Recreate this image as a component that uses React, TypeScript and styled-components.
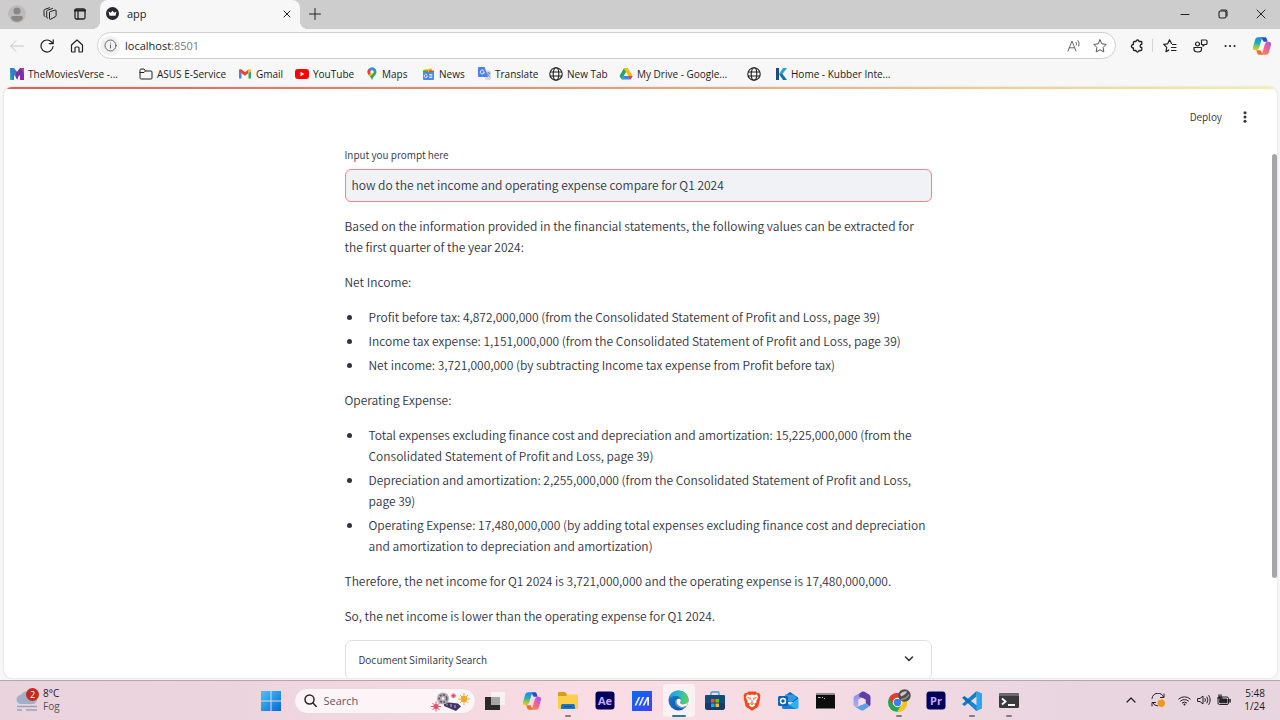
import React from "react";
import styled, { createGlobalStyle } from "styled-components";

const uiFont = `"Open Sans", "Noto Sans", sans-serif`;
const docFont = `"Noto Sans CJK SC", "Noto Sans", sans-serif`;

const GlobalStyle = createGlobalStyle`
  *, *::before, *::after { box-sizing: border-box; }
  body { margin: 0; background: #f7f7f7; }
  button, input { font: inherit; color: inherit; }
  button { border: 0; padding: 0; background: none; }
  svg { display: block; flex: none; }
`;

/* ---------- window frame ---------- */

const Window = styled.div`
  display: flex;
  flex-direction: column;
  height: 100vh;
  overflow: hidden;
  background: #f7f7f7;
  color: #1b1b1b;
  font-family: ${uiFont};
  font-size: 11px;
`;

const TabStrip = styled.div`
  display: flex;
  flex: none;
  height: 29px;
  background: #cdcdcd;
`;

const IconButton = styled.button<{ $w?: number }>`
  display: flex;
  align-items: center;
  justify-content: center;
  flex: none;
  width: ${(p) => p.$w ?? 30}px;
  height: 28px;
`;

const TabTools = styled.div`
  display: flex;
  flex: none;
  width: 100px;
  padding-left: 1px;
`;

const Tab = styled.div`
  position: relative;
  display: flex;
  align-items: center;
  flex: none;
  width: 200px;
  padding: 0 4px 2px 6px;
  gap: 8px;
  border-radius: 8px 8px 0 0;
  background: #f7f7f7;

  &::before,
  &::after {
    content: "";
    position: absolute;
    bottom: 0;
    width: 8px;
    height: 8px;
  }
  &::before {
    left: -8px;
    background: radial-gradient(circle at 0 0, #cdcdcd 8px, #f7f7f7 8px);
  }
  &::after {
    right: -8px;
    background: radial-gradient(circle at 100% 0, #cdcdcd 8px, #f7f7f7 8px);
  }
`;

const TabTitle = styled.span`
  flex: 1;
`;

const WindowButtons = styled.div`
  display: flex;
  margin-left: auto;
`;

const Toolbar = styled.div`
  display: flex;
  align-items: center;
  flex: none;
  height: 33px;
  padding: 0 3px 0 2px;
`;

const AddressBar = styled.div`
  display: flex;
  align-items: center;
  flex: 1;
  height: 27px;
  margin: 0 6px 0 5px;
  padding: 0 2px;
  border: 1px solid #cfcfcf;
  border-radius: 14px;
  background: #fff;
`;

const SiteInfo = styled.button`
  display: flex;
  align-items: center;
  justify-content: center;
  width: 20px;
  height: 20px;
  border-radius: 10px;
  background: #f1f1f1;
`;

const Url = styled.div`
  flex: 1;
  padding-left: 5px;
  color: #222;

  span {
    color: #777;
  }
`;

const Divider = styled.span`
  width: 1px;
  height: 13px;
  background: #d4d4d4;
`;

const Bookmarks = styled.nav`
  display: flex;
  align-items: center;
  flex: none;
  height: 25px;
  padding: 0 0 2px 10px;
`;

const Bookmark = styled.a<{ $w: number }>`
  display: flex;
  align-items: center;
  flex: none;
  gap: 4px;
  width: ${(p) => p.$w}px;
  font-size: 10px;
  white-space: nowrap;
  color: #1b1b1b;
  text-decoration: none;
`;

/* ---------- web page ---------- */

const Page = styled.div`
  display: flex;
  flex-direction: column;
  flex: 1;
  min-height: 0;
  margin: 0 3px 2px 4px;
  overflow: hidden;
  border-radius: 8px;
  background: #fff;
  box-shadow: 0 0 2px #c4c8c8;
  color: #31333f;
  font-family: ${docFont};
  font-weight: 350;
`;

const Decoration = styled.div`
  flex: none;
  height: 2px;
  background: linear-gradient(90deg, #da5f5f, #e0a27e 50%, #f5f0a4);
`;

const AppHeader = styled.header`
  display: flex;
  align-items: center;
  justify-content: flex-end;
  flex: none;
  height: 55px;
  gap: 8px;
  padding-right: 17px;
  font-size: 10px;
`;

const Scroller = styled.div`
  display: flex;
  flex: 1;
  min-height: 0;
`;

const Main = styled.main`
  flex: 1;
  overflow: hidden;
`;

const Column = styled.div`
  display: flex;
  flex-direction: column;
  max-width: 587px;
  margin: 0 auto;
  gap: 14px;
  font-size: 12px;
  line-height: 21px;
`;

const Field = styled.div`
  display: flex;
  flex-direction: column;
  gap: 4px;
  height: 57px;
`;

const FieldLabel = styled.label`
  font-size: 10px;
`;

const PromptInput = styled.input`
  flex: none;
  width: 100%;
  height: 33px;
  padding: 0 6px 2px;
  border: 1px solid #ee8389;
  border-radius: 6px;
  outline: none;
  background: #f0f2f6;
  font-size: 12px;
`;

const Paragraph = styled.p`
  margin: 0;
`;

const List = styled.ul`
  display: flex;
  flex-direction: column;
  gap: 3px;
  margin: 0 -4px 0 0;
  padding-left: 18px;

  li {
    padding-left: 6px;
  }
`;

const Expander = styled.button`
  display: flex;
  align-items: center;
  justify-content: space-between;
  width: 100%;
  height: 40px;
  padding: 0 17px 2px 13px;
  border: 1px solid #dddee1;
  border-radius: 7px;
  font-size: 10px;
`;

const Track = styled.div`
  flex: none;
  width: 5px;
  padding-top: 10px;
`;

const Thumb = styled.div`
  height: 81%;
  border-radius: 3px;
  background: #a5a5ab;
`;

/* ---------- taskbar ---------- */

const Taskbar = styled.footer`
  display: grid;
  grid-template-columns: 1fr 775px 1fr;
  flex: none;
  height: 40px;
  border-top: 1px solid #b3a6ad;
  background: linear-gradient(90deg, #e9d3dd, #ecd4de 18%, #fadde4 48%, #f6dbe3 62%, #e8d5e0 85%, #e7d5e0);
`;

const Weather = styled.button`
  display: flex;
  align-items: center;
  gap: 3px;
  padding: 0 0 2px 16px;
  font-size: 10px;
  line-height: 13px;
  text-align: left;

  small {
    display: block;
    font-size: 10px;
    color: #5a5158;
  }
`;

const Dock = styled.div`
  display: flex;
  align-items: center;
`;

const StartButton = styled.button`
  display: flex;
  justify-content: center;
  flex: none;
  width: 37px;
`;

const SearchBox = styled.label`
  display: flex;
  align-items: center;
  flex: none;
  width: 182px;
  height: 26px;
  margin: 0 1px 0 4px;
  padding: 0 5px 0 9px;
  gap: 7px;
  border: 1px solid #ead9df;
  border-radius: 13px;
  background: #fcf4f6;

  input {
    flex: 1;
    min-width: 0;
    padding: 0;
    border: 0;
    outline: none;
    background: none;
    font-size: 11px;
  }
  input::placeholder {
    color: #5f585c;
    opacity: 1;
  }
`;

const Apps = styled.div`
  display: grid;
  grid-template-columns: repeat(15, 1fr);
  flex: 1;
`;

const AppButton = styled.button<{ $active?: boolean; $running?: boolean }>`
  position: relative;
  display: flex;
  align-items: center;
  justify-content: center;
  justify-self: center;
  width: 32px;
  height: 33px;
  border-radius: 4px;
  background: ${(p) => (p.$active ? "#fbf1f4" : "transparent")};

  &::after {
    content: "";
    display: ${(p) => (p.$active || p.$running ? "block" : "none")};
    position: absolute;
    bottom: 0;
    left: 50%;
    width: ${(p) => (p.$active ? 14 : 6)}px;
    height: 2px;
    border-radius: 1px;
    background: ${(p) => (p.$active ? "#26808d" : "#857b80")};
    transform: translateX(-50%);
  }
`;

const Tray = styled.div`
  display: flex;
  align-items: center;
  justify-content: flex-end;
  padding: 0 15px 1px 0;
`;

const Clock = styled.time`
  width: 30px;
  font-size: 10px;
  line-height: 13px;
  text-align: right;
  white-space: pre-line;
`;

/* ---------- icons ---------- */

type IconProps = { w: number; h?: number; sw?: number; color?: string; children: React.ReactNode };

const Icon = ({ w, h = w, sw = 1, color = "#222", children }: IconProps) => (
  <svg
    width={w}
    height={h}
    viewBox={`0 0 ${w} ${h}`}
    fill="none"
    stroke={color}
    strokeWidth={sw}
    strokeLinecap="round"
    strokeLinejoin="round"
    aria-hidden="true"
  >
    {children}
  </svg>
);

const Globe = () => (
  <Icon w={14} sw={1.1}>
    <circle cx="7" cy="7" r="6.2" />
    <ellipse cx="7" cy="7" rx="2.8" ry="6.2" />
    <path d="M1.2 5h11.6M1.2 9h11.6" />
  </Icon>
);

const Copilot = ({ id }: { id: string }) => (
  <svg width="20" height="20" viewBox="0 0 20 20" aria-hidden="true">
    <defs>
      <linearGradient id={`${id}a`} x1=".3" y1="0" x2=".2" y2="1">
        <stop offset="0" stopColor="#1f8be8" />
        <stop offset=".45" stopColor="#25b0b8" />
        <stop offset=".75" stopColor="#a8cb3c" />
        <stop offset="1" stopColor="#f3c11b" />
      </linearGradient>
      <linearGradient id={`${id}b`} x1=".9" y1="0" x2=".3" y2="1">
        <stop offset="0" stopColor="#a65bea" />
        <stop offset=".5" stopColor="#ee5da0" />
        <stop offset="1" stopColor="#f9894b" />
      </linearGradient>
    </defs>
    <path d="M9 1.200h3.800c1.100 0 1.700.7 2 1.700l.9 2.800h-4z" fill="#2450c8" />
    <path d="M11 18.800H7.200c-1.100 0-1.700-.7-2-1.700l-.9-2.800h4z" fill="#f26a3c" />
    <path d="M6.200 1.200h5.300c-1 .3-1.500 1-1.900 2.200L7.300 11.300c-.6 2-1.600 3-3.300 3h-.8C1.300 14.300.5 13 1 11L3.200 3.500C3.700 2 4.700 1.200 6.200 1.200z" fill={`url(#${id}a)`} />
    <path d="M13.800 18.800H8.500c1-.3 1.500-1 1.900-2.200l2.300-7.900c.6-2 1.600-3 3.300-3h.8c1.900 0 2.700 1.300 2.200 3.300l-2.200 7.500c-.5 1.500-1.500 2.300-3 2.300z" fill={`url(#${id}b)`} />
  </svg>
);

const GmailIcon = () => (
  <svg width="14" height="12" viewBox="0 0 14 12" aria-hidden="true">
    <path d="M1 3v7.500h2.500V5z" fill="#4285f4" />
    <path d="M13 3v7.500h-2.500V5z" fill="#34a853" />
    <path d="M1 2.500C1 1.200 2.400.8 3.500 1.500L7 4.200l3.500-2.700V5L7 7.700 1 3.400z" fill="#ea4335" />
    <path d="M10.500 1.500c1.100-.7 2.500-.3 2.500 1v1L10.500 5z" fill="#fbbc04" />
  </svg>
);

const bookmarks: { label: string; w: number; icon: React.ReactNode }[] = [
  {
    label: "TheMoviesVerse -...",
    w: 129,
    icon: (
      <svg width="14" height="12" viewBox="0 0 14 12" aria-hidden="true">
        <path d="M0 0h4v12H0z" fill="#37b6a0" />
        <path d="M0 0h4l4 5v7L4 7v5H2z" fill="#2b7fd0" />
        <path d="M14 0h-4L6 5v6l4-4v5h4z" fill="#7b2fa6" />
        <path d="M11 0h3v7z" fill="#c13a93" />
      </svg>
    ),
  },
  {
    label: "ASUS E-Service",
    w: 99,
    icon: (
      <Icon w={14} h={12}>
        <path d="M1 2q0-1 1-1h3l1.500 2H12q1 0 1 1v6q0 1-1 1H2q-1 0-1-1zM1 4.500h4L6.500 3" />
      </Icon>
    ),
  },
  { label: "Gmail", w: 57, icon: <GmailIcon /> },
  {
    label: "YouTube",
    w: 71,
    icon: (
      <svg width="14" height="10" viewBox="0 0 14 10" aria-hidden="true">
        <rect width="14" height="10" rx="3" fill="#f00" />
        <path d="M5.500 2.800v4.400L9.300 5z" fill="#fff" />
      </svg>
    ),
  },
  {
    label: "Maps",
    w: 56,
    icon: (
      <svg width="12" height="14" viewBox="0 0 12 14" aria-hidden="true">
        <path d="M6 .5a4.500 4.500 0 0 0-4.500 4.500C1.500 8 5.300 9.500 6 13.500 6.700 9.500 10.500 8 10.500 5A4.500 4.500 0 0 0 6 .5z" fill="#34a853" />
        <path d="M6 .5A4.500 4.500 0 0 1 10.200 3.500L6 5z" fill="#4285f4" />
        <path d="M6 .5L2.500 2.200 4.500 5 7.500 1z" fill="#4285f4" />
        <path d="M2.600 2.100C1 4 1.300 6.300 2.600 8L6 5z" fill="#ea4335" />
        <path d="M2.600 8.100L6 5l1 2-3.300 2.600z" fill="#fbbc04" />
        <circle cx="6" cy="4.900" r="1.700" fill="#fff" />
      </svg>
    ),
  },
  {
    label: "News",
    w: 56,
    icon: (
      <svg width="13" height="12" viewBox="0 0 13 12" aria-hidden="true">
        <path d="M2 1.500l8-1 .5 4H2z" fill="#fbbc04" />
        <path d="M1 2.500h5v3H1z" fill="#34a853" />
        <path d="M7 2.200l5 .5-.3 3H7z" fill="#ea4335" />
        <rect x="1" y="4" width="11" height="8" rx="1" fill="#4c86ee" />
        <path d="M5.400 8H4.200M5.400 8A1.600 1.600 0 1 1 4.900 6.800M7.300 6.500h3M7.300 8h3M7.300 9.500h3" stroke="#fff" strokeWidth=".8" fill="none" />
      </svg>
    ),
  },
  {
    label: "Translate",
    w: 71,
    icon: (
      <svg width="13" height="13" viewBox="0 0 13 13" aria-hidden="true">
        <path d="M5 3.500h7q1 0 1 1V12q0 1-1 1H7.500z" fill="#d5d8dc" />
        <path d="M1 0h5.500L10 10H1Q0 10 0 9V1q0-1 1-1z" fill="#4a80e8" />
        <path d="M6.300 5H4.800M6.300 5A2 2 0 1 1 5.700 3.500" stroke="#fff" strokeWidth=".9" fill="none" />
        <path d="M8.500 6h3.500M10.300 5v1M11.600 6c-.4 1.800-1.500 3-2.600 3.700M9.300 7c.5 1.200 1.500 2.200 2.500 2.700" stroke="#5a7fc0" strokeWidth=".8" fill="none" />
      </svg>
    ),
  },
  { label: "New Tab", w: 70, icon: <Globe /> },
  {
    label: "My Drive - Google...",
    w: 128,
    icon: (
      <svg width="14" height="12" viewBox="0 0 14 12" aria-hidden="true">
        <path d="M4.800.5h4.400L7 4.300 2.700 11.500.5 8z" fill="#1fa463" />
        <path d="M9.200.5L13.600 8H9.300L4.800.5z" fill="#fbbc04" />
        <path d="M4.800 8h8.800l-2.200 3.500H2.700z" fill="#4285f4" />
        <path d="M9.300 8h4.300l-2 3.500z" fill="#ea4335" />
        <path d="M7 4.300L9.200 8H4.800z" fill="#f7f7f7" />
      </svg>
    ),
  },
  { label: "", w: 28, icon: <Globe /> },
  {
    label: "Home - Kubber Inte...",
    w: 130,
    icon: (
      <svg width="12" height="12" viewBox="0 0 12 12" aria-hidden="true">
        <path d="M1 0h3v12H1z" fill="#174e80" />
        <path d="M4 6l4-6h4L7.500 6z" fill="#2ba3c8" />
        <path d="M4 6h3.500L12 12H8z" fill="#1b6f9f" />
      </svg>
    ),
  },
];

/* ---------- taskbar app icons ---------- */

const AdobeTile = ({ label }: { label: string }) => (
  <svg width="20" height="20" viewBox="0 0 20 20" aria-hidden="true">
    <rect x=".5" y=".5" width="19" height="18" rx="3" fill="#00005b" />
    <text x="10" y="14" textAnchor="middle" fill="#c9a5ff" fontFamily="Open Sans" fontWeight="700" fontSize="11">
      {label}
    </text>
  </svg>
);

const apps: { name: string; active?: boolean; running?: boolean; icon: React.ReactNode }[] = [
  {
    name: "Task view",
    icon: (
      <svg width="20" height="20" viewBox="0 0 20 20" aria-hidden="true">
        <path d="M0 6h15v13H0z" fill="#2c2a2b" />
        <path d="M6 1h14v13H6z" fill="#f6f1f3" />
        <path d="M6 6h9v8H6z" fill="#a8a5a6" />
      </svg>
    ),
  },
  { name: "Copilot", icon: <Copilot id="dock" /> },
  {
    name: "File Explorer",
    running: true,
    icon: (
      <svg width="20" height="19" viewBox="0 0 20 19" aria-hidden="true">
        <path d="M0 2q0-1 1-1h6l2 2.500V8H0z" fill="#dc9a1c" />
        <path d="M1 5h7l1.500-1.500H19q1 0 1 1V17q0 1-1 1H1q-1 0-1-1V6q0-1 1-1z" fill="#fbcf4b" />
        <path d="M3 18v-3.500Q3 13 4.500 13h11q1.500 0 1.500 1.500V18z" fill="#1874c4" />
        <path d="M6 15.500h8" stroke="#0c4f94" />
      </svg>
    ),
  },
  { name: "After Effects", icon: <AdobeTile label="Ae" /> },
  {
    name: "MyASUS",
    icon: (
      <svg width="20" height="20" viewBox="0 0 20 20" aria-hidden="true">
        <defs>
          <linearGradient id="asus" x1="0" y1="0" x2="1" y2="1">
            <stop offset="0" stopColor="#0a6af5" />
            <stop offset="1" stopColor="#3f42f0" />
          </linearGradient>
        </defs>
        <rect width="20" height="20" fill="url(#asus)" />
        <path d="M2.500 14.500L6.500 6h1.800l-4 8.500zM6.500 14.500l4-8.500h1.800l-4 8.500zM10.500 14.500L15 6h2v8.500h-1.800V9l-2.700 5.500z" fill="#e9f0ff" />
      </svg>
    ),
  },
  {
    name: "Edge",
    active: true,
    icon: (
      <svg width="21" height="21" viewBox="0 0 21 21" aria-hidden="true">
        <defs>
          <linearGradient id="edgeTop" x1="0" y1=".4" x2="1" y2=".5">
            <stop offset="0" stopColor="#1f9fdc" />
            <stop offset=".5" stopColor="#2bb8c8" />
            <stop offset="1" stopColor="#62d24a" />
          </linearGradient>
          <linearGradient id="edgeLow" x1="0" y1="0" x2="1" y2="1">
            <stop offset="0" stopColor="#1b7fd4" />
            <stop offset="1" stopColor="#0c4fa0" />
          </linearGradient>
        </defs>
        <circle cx="10.500" cy="10.500" r="10" fill="url(#edgeLow)" />
        <path d="M.6 9.500C1.200 4.200 5.400.5 10.500.5c5.800 0 10 4.200 10 8.800 0 3-2.300 5-5 5-2 0-3.300-.8-3.300-1.600 0-.6.800-1 .8-2.400C13 8 10.800 6 8 6 4.500 6 1.500 7.500.6 9.500z" fill="url(#edgeTop)" />
        <path d="M8.500 9.500c-1.300 2.800.8 7.500 5.800 7.500 2 0 3.700-.7 5-1.700-.5.900-1.200 1.900-2 2.600-5 1.500-10.500-1.500-10.300-6 .1-1.100.7-2 1.500-2.400z" fill="#fbf1f4" opacity=".35" />
        <path d="M12.900 10.300c0 1.400-.8 1.800-.8 2.400 0 .8 1.300 1.600 3.400 1.600 2 0 3.800-1 4.600-2.800-.1 1.500-.4 2.800-.8 3.800-2 1.300-4 1.900-6 1.600-3.200-.6-5.600-3.600-4.700-6.800.8-1.800 4.300-2 4.300.2z" fill="#fbf1f4" />
      </svg>
    ),
  },
  {
    name: "Microsoft Store",
    icon: (
      <svg width="20" height="20" viewBox="0 0 20 20" aria-hidden="true">
        <path d="M6 5V1.700Q6 1 7 1h6q1 0 1 .7V5" stroke="#2fa3dc" strokeWidth="1.300" fill="none" />
        <path d="M1 4h18q1 0 1 1v11q0 3-3 3H3q-3 0-3-3V5q0-1 1-1z" fill="#174a7c" />
        <path d="M0 12h20v4q0 3-3 3H3q-3 0-3-3z" fill="#153d6c" />
        <path d="M6 8h3.500v3.500H6z" fill="#f0502a" />
        <path d="M10.500 8H14v3.500h-3.500z" fill="#80bb14" />
        <path d="M6 12.500h3.500V16H6z" fill="#20a5ea" />
        <path d="M10.500 12.500H14V16h-3.500z" fill="#fdb913" />
      </svg>
    ),
  },
  {
    name: "Brave",
    icon: (
      <svg width="18" height="20" viewBox="0 0 18 20" aria-hidden="true">
        <path d="M5.500.5h7l1.800 1.800 1.700-.2 1.500 2.400-.5 1.700.3 1-2.100 8.500L9 19.800l-6.200-4.100L.7 7.200l.3-1L.5 4.500 2 2.100l1.700.2z" fill="#f5471c" />
        <path d="M9 3.500l2 .5 3-.4 1.200 3-1.800 3.200.2 1.700-2.300 1.200.7 1.800L9 16.500l-3-2 .7-1.800-2.300-1.200.2-1.700L2.800 6.600l1.200-3L7 4z" fill="#fff" />
        <path d="M4.500 6.500l3 .8L7 9M13.500 6.500l-3 .8.500 1.700M9 9v2.500l-1.500 1L9 13.700l1.500-1.200L9 11.500" stroke="#f5471c" strokeWidth=".9" fill="none" />
      </svg>
    ),
  },
  {
    name: "Outlook",
    icon: (
      <svg width="21" height="19" viewBox="0 0 21 19" aria-hidden="true">
        <path d="M4 7l8-6 8 5.500V11H4z" fill="#0f5ba8" />
        <path d="M7 3.500h9l3 3.500-6 4.500-6-3z" fill="#2f9be6" />
        <path d="M4 9l8 4.500L20.500 7v9q0 2-2 2H6q-2 0-2-2z" fill="#28b4ee" />
        <path d="M4 10l14 8H6q-2 0-2-2z" fill="#1681d6" />
        <rect y="5" width="10" height="10" rx="1.500" fill="#0a63b8" />
        <circle cx="5" cy="10" r="2.500" stroke="#fff" strokeWidth="1.400" fill="none" />
      </svg>
    ),
  },
  {
    name: "Command Prompt",
    icon: (
      <svg width="19" height="16" viewBox="0 0 19 16" aria-hidden="true">
        <rect width="19" height="16" rx="1" fill="#0d0d0d" />
        <path d="M0 0h19v2H0z" fill="#8d8b8c" />
        <path d="M2 4.500h2.500M6 4.500h1M8 5l1 1" stroke="#ddd" strokeWidth=".9" />
        <path d="M.5 15.500h18" stroke="#777" />
      </svg>
    ),
  },
  {
    name: "Microsoft 365",
    icon: (
      <svg width="18" height="20" viewBox="0 0 18 20" aria-hidden="true">
        <defs>
          <linearGradient id="m365" x1="0" y1="0" x2="0" y2="1">
            <stop offset="0" stopColor="#8b86e6" />
            <stop offset="1" stopColor="#a9b4ee" />
          </linearGradient>
        </defs>
        <path d="M9.500.5L2 4.700Q.5 5.600.5 7.200v6q0 1.500 1.300 2.300l2.700 1.300 1-4V8.500L12 5z" fill="url(#m365)" />
        <path d="M2 15.700q2 .8 3.500-.2l6-3.500 5 3.200-5.500 3.700q-1.800 1-3.500 0z" fill="#5b9fe6" />
        <path d="M9.500.5q1-.3 2 .3L16 3.500q1.500.9 1.500 2.500v7q0 1.300-1 2.200L12.500 12V8.500L6 5.500q0-3.500 3.500-5z" fill="#5f3fa8" />
        <path d="M9 6.700l3.500 2V12L9 14l-3.500-2V8.700z" fill="#f4dfe7" />
      </svg>
    ),
  },
  {
    name: "Chrome",
    running: true,
    icon: (
      <svg width="24" height="24" viewBox="0 0 24 24" aria-hidden="true">
        <circle cx="10.500" cy="13.500" r="9.500" fill="#2ba24c" />
        <path d="M2.300 8.700a9.500 9.500 0 0 1 16.400 0H10.500l-4.200 7z" fill="#e33b2e" />
        <path d="M18.700 8.700a9.500 9.500 0 0 1-8.700 14.300l4.500-7.200-4-7.100z" fill="#fcc31e" />
        <circle cx="10.500" cy="13.500" r="4.700" fill="#fff" />
        <circle cx="10.500" cy="13.500" r="3.700" fill="#3b7de9" />
        <circle cx="17.500" cy="6.500" r="6.200" fill="#4d4c4c" />
        <path d="M13 5q3-3.500 7-2.500-1 3-6 5z" fill="#c9c7c7" />
        <path d="M14 10.500q5 0 8-5" stroke="#8d8b8b" strokeWidth="1.500" fill="none" />
      </svg>
    ),
  },
  { name: "Premiere Pro", icon: <AdobeTile label="Pr" /> },
  {
    name: "Visual Studio Code",
    running: true,
    icon: (
      <svg width="20" height="20" viewBox="0 0 20 20" aria-hidden="true">
        <path d="M14.500 0L20 2.500v15L14.500 20z" fill="#2aa5ee" />
        <path d="M14.500 0v5.500L2.500 15 0 13.200z" fill="#1480cc" />
        <path d="M14.500 20v-5.500L2.500 5 0 6.800z" fill="#0f6db5" />
        <path d="M14.500 20v-5.500L8.500 10l-2 1.700z" fill="#1987d6" />
      </svg>
    ),
  },
  {
    name: "Terminal",
    running: true,
    icon: (
      <svg width="20" height="17" viewBox="0 0 20 17" aria-hidden="true">
        <rect y="1" width="20" height="15" rx="1.500" fill="#3b3a3b" />
        <path d="M0 4V2.500Q0 1 1.500 1h17Q20 1 20 2.500V4z" fill="#6a686a" />
        <path d="M3 6.500l3.500 3L3 12.500M9 13h7" stroke="#fff" strokeWidth="1.800" fill="none" />
      </svg>
    ),
  },
];

/* ---------- page copy ---------- */

const netIncome = [
  "Profit before tax: 4,872,000,000 (from the Consolidated Statement of Profit and Loss, page 39)",
  "Income tax expense: 1,151,000,000 (from the Consolidated Statement of Profit and Loss, page 39)",
  "Net income: 3,721,000,000 (by subtracting Income tax expense from Profit before tax)",
];

const operatingExpense = [
  "Total expenses excluding finance cost and depreciation and amortization: 15,225,000,000 (from the Consolidated Statement of Profit and Loss, page 39)",
  "Depreciation and amortization: 2,255,000,000 (from the Consolidated Statement of Profit and Loss, page 39)",
  "Operating Expense: 17,480,000,000 (by adding total expenses excluding finance cost and depreciation and amortization to depreciation and amortization)",
];

const BrowserChrome = () => (
  <>
    <TabStrip>
      <TabTools>
        <IconButton $w={32} aria-label="Profile">
          <svg width="18" height="18" viewBox="0 0 18 18" aria-hidden="true">
            <circle cx="9" cy="9" r="9" fill="#bdbbb9" />
            <circle cx="9" cy="6" r="3.600" fill="#8b8785" />
            <path d="M3 13q0-2 2-2h8q2 0 2 2c-1 2.500-3.300 3.800-6 3.800S4 15.500 3 13z" fill="#8b8785" />
          </svg>
        </IconButton>
        <IconButton $w={34} aria-label="Workspaces">
          <Icon w={14}>
            <path d="M6.500 5.500q0-.6.600-.8l5-1.700q1-.2 1 .7v5q0 .7-.6.900l-5 2.700q-1 .3-1-.6z" />
            <path d="M4.500 11.200q-.8-.2-.8-1V4.300q0-.7.600-.9l5.200-2M2 9.500q-1-.3-1-1.200V3.300q0-.6.600-.8L6.500.7" />
          </Icon>
        </IconButton>
        <IconButton $w={26} aria-label="Tab actions">
          <Icon w={12} sw={1.300}>
            <rect x="1" y="1" width="10" height="10" rx="1.500" />
            <path d="M1 2.500h10" strokeWidth="2" />
            <path d="M4 3v8" />
          </Icon>
        </IconButton>
      </TabTools>
      <Tab>
        <svg width="13" height="13" viewBox="0 0 13 13" aria-hidden="true">
          <circle cx="6.500" cy="6.500" r="6.500" fill="#262730" />
          <path d="M2.500 4.500l2.300 1.300L6.500 3.800l1.700 2 2.300-1.300-1 4.200h-6z" fill="#fff" />
        </svg>
        <TabTitle>app</TabTitle>
        <IconButton $w={18} aria-label="Close tab">
          <Icon w={8}>
            <path d="M1 1l6 6M7 1L1 7" />
          </Icon>
        </IconButton>
      </Tab>
      <IconButton $w={29} aria-label="New tab">
        <Icon w={12}>
          <path d="M6 .5v11M.5 6h11" />
        </Icon>
      </IconButton>
      <WindowButtons>
        <IconButton $w={38} aria-label="Minimize">
          <Icon w={10}>
            <path d="M1 5.500h8" />
          </Icon>
        </IconButton>
        <IconButton $w={38} aria-label="Restore">
          <Icon w={10} sw={1.100}>
            <rect x="1" y="2" width="7" height="7" rx="1.500" />
            <path d="M3 1h4.500Q9 1 9 2.500V7" />
          </Icon>
        </IconButton>
        <IconButton $w={38} aria-label="Close">
          <Icon w={10}>
            <path d="M1 1l8 8M9 1L1 9" />
          </Icon>
        </IconButton>
      </WindowButtons>
    </TabStrip>

    <Toolbar>
      <IconButton aria-label="Back">
        <Icon w={14} color="#c4c4c4">
          <path d="M13.500 7H.7M6 1.700L.7 7 6 12.300" />
        </Icon>
      </IconButton>
      <IconButton aria-label="Refresh">
        <Icon w={14} sw={1.200}>
          <path d="M13 7.500A6 6 0 1 1 11.500 3L13 4.500M13.200.8v3.900H9.300" />
        </Icon>
      </IconButton>
      <IconButton aria-label="Home">
        <Icon w={14} sw={1.200}>
          <path d="M1.500 6L7 1l5.500 5v6.500q0 .5-.5.500H9V9q0-1-1-1H6Q5 8 5 9v4H2q-.5 0-.5-.5z" />
        </Icon>
      </IconButton>
      <AddressBar>
        <SiteInfo aria-label="Site information">
          <Icon w={13} color="#666">
            <circle cx="6.500" cy="6.500" r="5.500" />
            <path d="M6.500 6v3M6.500 4v.1" />
          </Icon>
        </SiteInfo>
        <Url>
          localhost<span>:8501</span>
        </Url>
        <IconButton $w={26} aria-label="Read aloud">
          <Icon w={14} color="#666">
            <path d="M1 12L5 2l4 10M2.300 8.800h5.400M9 3.300q1 1.200.5 2.700M11 1.500q2 2.500.8 5.500" />
          </Icon>
        </IconButton>
        <IconButton $w={26} aria-label="Add to favorites">
          <Icon w={14} color="#555">
            <path d="M7 .8l1.900 4 4.300.6-3.100 3.100.7 4.400L7 10.800l-3.800 2.100.7-4.400L.8 5.400l4.300-.6z" />
          </Icon>
        </IconButton>
      </AddressBar>
      <IconButton aria-label="Extensions">
        <Icon w={14} sw={1.300}>
          <path d="M4.500 2.500H6C6 .5 9 .5 9 2.500h2q.8 0 .8.800v2c-2.300 0-2.300 3.200 0 3.200v2.200q0 .8-.8.800H9c0 2-3 2-3 0H4.200q-.8 0-.8-.8V9C.8 9 .8 5.500 3.400 5.500V3.300q0-.8 1.100-.8z" />
        </Icon>
      </IconButton>
      <Divider />
      <IconButton $w={34} aria-label="Favorites">
        <Icon w={14} sw={1.200}>
          <path d="M8.500 4.500L6.500.8l-1.800 4-4 .6 3 3-.7 4.200 2.800-1.500M9.500 5.500H13M8.500 8.500H13M8.500 11.500H13" />
        </Icon>
      </IconButton>
      <IconButton $w={26} aria-label="Copilot sharing">
        <Icon w={15} h={14} sw={1.200}>
          <circle cx="4.500" cy="5" r="2" />
          <path d="M1 8.500h7.500v1.800C8.500 12 7 13 4.800 13S1 12 1 10.300zM8.500 1H13q1 0 1 1v2.500q0 1-1 1h-1.500L10 7V5.500H8.500z" />
        </Icon>
      </IconButton>
      <IconButton $w={34} aria-label="Settings">
        <Icon w={12} h={4} sw={2}>
          <path d="M1.500 2h.1M6 2h.1M10.500 2h.1" />
        </Icon>
      </IconButton>
      <IconButton $w={30} aria-label="Copilot">
        <Copilot id="bar" />
      </IconButton>
    </Toolbar>

    <Bookmarks>
      {bookmarks.map((b, i) => (
        <Bookmark key={i} href="#" $w={b.w} aria-label={b.label || "Untitled bookmark"}>
          {b.icon}
          {b.label}
        </Bookmark>
      ))}
    </Bookmarks>
  </>
);

const DesktopTaskbar = () => (
  <Taskbar>
    <Weather>
      <svg width="24" height="26" viewBox="0 0 24 26" aria-hidden="true">
        <path d="M5 17a4.500 4.500 0 0 1 0-9 6 6 0 0 1 11 0 4.500 4.500 0 0 1 1 9z" fill="#9fb0c8" />
        <path d="M1 19.500h20M1 23h5M10 23h11" stroke="#98a2bb" strokeWidth="1.600" />
        <circle cx="16.500" cy="7.500" r="6.500" fill="#c42b1c" />
        <text x="16.500" y="11" textAnchor="middle" fill="#fff" fontFamily="Open Sans" fontSize="9">
          2
        </text>
      </svg>
      <span>
        8°C<small>Fog</small>
      </span>
    </Weather>

    <Dock>
      <StartButton aria-label="Start">
        <svg width="20" height="20" viewBox="0 0 20 20" aria-hidden="true">
          <defs>
            <linearGradient id="win" x1="0" y1="0" x2="1" y2="1">
              <stop offset="0" stopColor="#4cc4f5" />
              <stop offset="1" stopColor="#0868d0" />
            </linearGradient>
          </defs>
          <path d="M0 0h9.500v9.500H0zM10.500 0H20v9.500h-9.500zM0 10.500h9.500V20H0zM10.500 10.500H20V20h-9.500z" fill="url(#win)" />
        </svg>
      </StartButton>
      <SearchBox>
        <Icon w={13} sw={1.500} color="#2a2628">
          <circle cx="5.500" cy="5.500" r="4.500" />
          <path d="M9 9l3.300 3.500" />
        </Icon>
        <input type="search" placeholder="Search" aria-label="Search" />
        <svg width="40" height="22" viewBox="0 0 40 22" aria-hidden="true">
          <g stroke="#e5506c" strokeWidth="1">
            <path d="M6 11.500v10M1 16.500h10M2.500 13l7 7M9.500 13l-7 7" />
          </g>
          <circle cx="6" cy="16.500" r="2.500" fill="#e5506c" />
          <path d="M14 12l14 1.500 3 3-5 4.500L14 16z" fill="#3f3566" />
          <path d="M17 13.500v2M21 14v3M25 15v3" stroke="#a99cd0" strokeWidth="1.200" />
          <circle cx="13" cy="8.500" r="6" fill="#b1aab5" />
          <circle cx="13" cy="8.500" r="3.800" fill="none" stroke="#5a5262" strokeWidth="1.600" strokeDasharray="2 1.500" />
          <circle cx="13" cy="8.500" r="1.300" fill="#fff" />
          <path d="M23.500 3.500v4.500M21.200 5.800h4.600" stroke="#e5506c" strokeWidth="2" />
          <g stroke="#f0ab2e" strokeWidth="1">
            <path d="M34 3v12M28 9h12M30 5l8 8M38 5l-8 8" />
          </g>
          <circle cx="34" cy="9" r="3.200" fill="#f0ab2e" />
        </svg>
      </SearchBox>
      <Apps>
        {apps.map((a) => (
          <AppButton key={a.name} aria-label={a.name} $active={a.active} $running={a.running}>
            {a.icon}
          </AppButton>
        ))}
      </Apps>
    </Dock>

    <Tray>
      <IconButton $w={24} aria-label="Show hidden icons">
        <Icon w={10} h={6} sw={1.200}>
          <path d="M1 5l4-4 4 4" />
        </Icon>
      </IconButton>
      <IconButton $w={30} aria-label="Update available">
        <Icon w={14} h={14}>
          <path d="M1 5.500A6 6 0 0 1 12.500 4M13 1v3.500H9.500M6.500 13A6 6 0 0 1 1.500 9.500M1 13V9.500h3.500" />
          <circle cx="10.300" cy="10.300" r="3.700" fill="#f09a1c" stroke="none" />
        </Icon>
      </IconButton>
      <IconButton $w={22} aria-label="Wi-Fi">
        <Icon w={13} h={11}>
          <path d="M.7 4a8.500 8.500 0 0 1 11.600 0M2.500 6a6 6 0 0 1 8 0M4.300 7.900a3.300 3.300 0 0 1 4.400 0" />
          <circle cx="6.500" cy="9.500" r="1" fill="#222" stroke="none" />
        </Icon>
      </IconButton>
      <IconButton $w={18} aria-label="Volume">
        <Icon w={14} h={12}>
          <path d="M1 4.500h2L6 2v8L3 7.500H1zM8 4.500q1 1.500 0 3M10 3q2 3 0 6M11.800 1.500q3 4.500 0 9" />
        </Icon>
      </IconButton>
      <IconButton $w={22} aria-label="Battery">
        <Icon w={14} h={12}>
          <rect x="1" y="3" width="10.500" height="7.500" rx="1.500" />
          <path d="M4 5h6v3.800H2.700V7z" fill="#222" />
          <path d="M13 5.500v2.500" strokeWidth="1.500" />
          <path d="M1 4h4M2 .8v2M4 .8v2M3 4v3" strokeWidth="1.300" />
        </Icon>
      </IconButton>
      <Clock>{"5:48\n1/24"}</Clock>
    </Tray>
  </Taskbar>
);

export default function App() {
  return (
    <Window>
      <GlobalStyle />
      <BrowserChrome />
      <Page>
        <Decoration />
        <AppHeader>
          <button>Deploy</button>
          <IconButton aria-label="Main menu">
            <svg width="4" height="12" viewBox="0 0 4 12" fill="#31333f" aria-hidden="true">
              <circle cx="2" cy="1.700" r="1.500" />
              <circle cx="2" cy="6" r="1.500" />
              <circle cx="2" cy="10.300" r="1.500" />
            </svg>
          </IconButton>
        </AppHeader>
        <Scroller>
          <Main>
            <Column>
              <Field>
                <FieldLabel htmlFor="prompt">Input you prompt here</FieldLabel>
                <PromptInput id="prompt" defaultValue="how do the net income and operating expense compare for Q1 2024" />
              </Field>
              <Paragraph>
                Based on the information provided in the financial statements, the following values can be extracted for
                the first quarter of the year 2024:
              </Paragraph>
              <Paragraph>Net Income:</Paragraph>
              <List>
                {netIncome.map((t) => (
                  <li key={t}>{t}</li>
                ))}
              </List>
              <Paragraph>Operating Expense:</Paragraph>
              <List>
                {operatingExpense.map((t) => (
                  <li key={t}>{t}</li>
                ))}
              </List>
              <Paragraph>
                Therefore, the net income for Q1 2024 is 3,721,000,000 and the operating expense is 17,480,000,000.
              </Paragraph>
              <Paragraph>So, the net income is lower than the operating expense for Q1 2024.</Paragraph>
              <Expander aria-expanded="false">
                Document Similarity Search
                <Icon w={10} h={6} sw={1.600} color="#31333f">
                  <path d="M1.500 1L5 4.500 8.500 1" />
                </Icon>
              </Expander>
            </Column>
          </Main>
          <Track>
            <Thumb />
          </Track>
        </Scroller>
      </Page>
      <DesktopTaskbar />
    </Window>
  );
}
